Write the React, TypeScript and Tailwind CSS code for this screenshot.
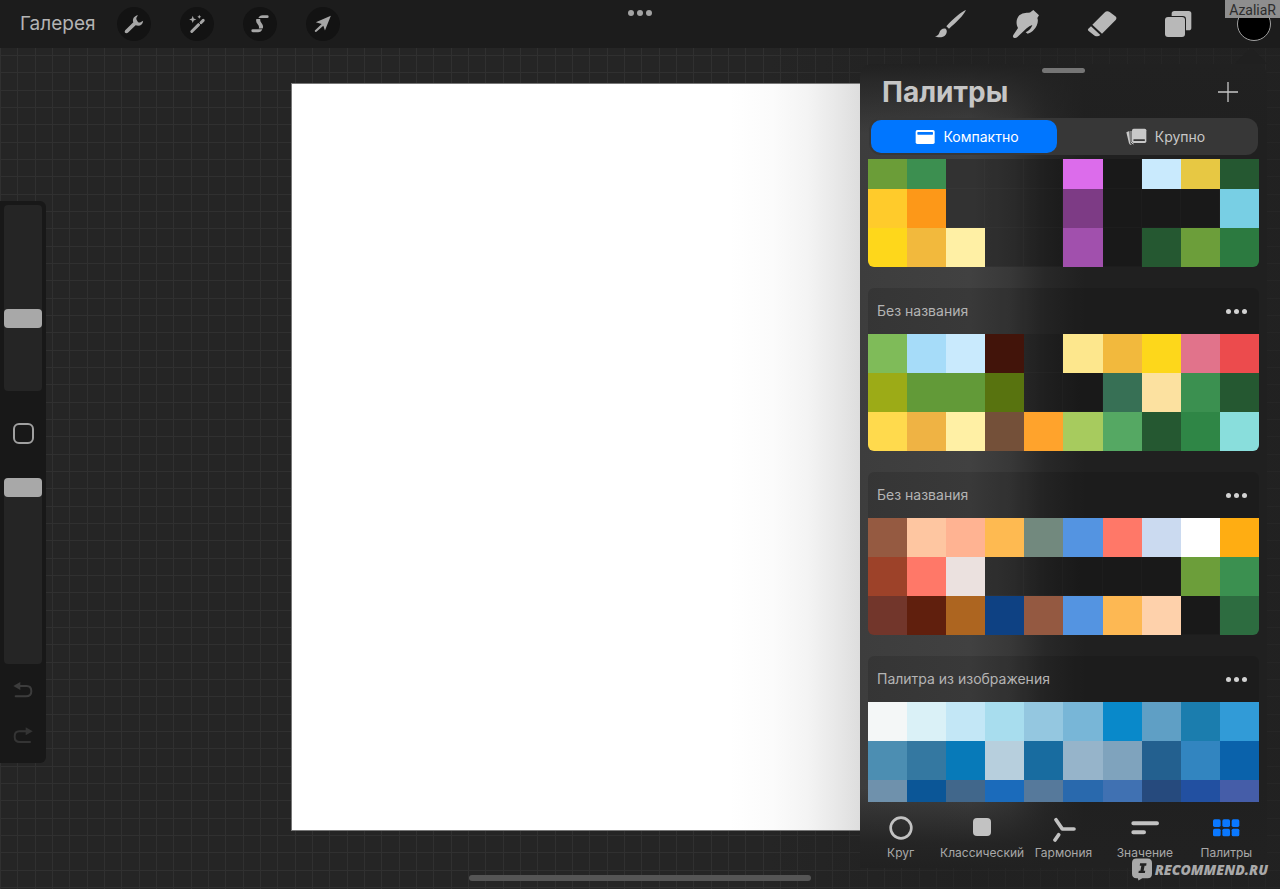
import { useLayoutEffect, useRef, type ReactNode } from 'react';

type Row = (string | null)[];

interface Palette {
  name?: string;
  rows: Row[];
}

const palettes: Palette[] = [
  {
    rows: [
      ['#6b9d38', '#3c8f50', null, null, null, '#dc6ceb', null, '#c9eafd', '#e7c843', '#255831'],
      ['#ffcb2b', '#fd9818', null, null, null, '#7d3b85', null, null, null, '#78cfe4'],
      ['#fed71b', '#f2b93d', '#fff0a5', null, null, '#a150ad', null, '#255831', '#6c9e3a', '#2c7a40'],
    ],
  },
  {
    name: 'Без названия',
    rows: [
      ['#7fbb59', '#a6dcf9', '#c9eafd', '#42140a', null, '#fde78d', '#f2b93d', '#fdd71b', '#e1738b', '#ec4b4d'],
      ['#9cab17', '#629a38', '#629a38', '#58730f', null, null, '#377055', '#fce1a0', '#3b9050', '#255831'],
      ['#ffda4d', '#efb344', '#fff0a5', '#745039', '#ffa32c', '#a7cb5e', '#55a863', '#255831', '#2f8646', '#89dedc'],
    ],
  },
  {
    name: 'Без названия',
    rows: [
      ['#955a41', '#fec6a1', '#ffb392', '#feba51', '#72897e', '#5494e1', '#ff7868', '#cbdaf0', '#ffffff', '#ffad12'],
      ['#9d4229', '#ff7868', '#ebe1df', null, null, null, null, null, '#6c9e3a', '#3b9050'],
      ['#72362b', '#601f0d', '#ad6520', '#0e4183', '#945941', '#5494e1', '#fdb853', '#fed1ab', null, '#2d6c40'],
    ],
  },
  {
    name: 'Палитра из изображения',
    rows: [
      ['#f4f7f7', '#daf1f7', '#c3e7f6', '#a8ddee', '#94c7e0', '#78b6d7', '#0989ca', '#5f9fc5', '#1b7dae', '#319bd7'],
      ['#4c8eb2', '#3478a1', '#077ab9', '#b7cfdd', '#186ca0', '#96b4ca', '#7fa3bd', '#23608f', '#3285c0', '#0a62ab'],
      ['#6f91ac', '#0b5697', '#41678b', '#1b6bbb', '#56799b', '#2969ad', '#4071b2', '#264a7d', '#2250a1', '#455da8'],
    ],
  },
];

function Svg({ box, className, children }: { box: string; className: string; children: ReactNode }) {
  return (
    <svg viewBox={box} className={className} fill="currentColor" aria-hidden="true">
      {children}
    </svg>
  );
}

function RoundButton({ label, children }: { label: string; children: ReactNode }) {
  return (
    <button aria-label={label} className="flex size-[34px] items-center justify-center rounded-full bg-[#131313] text-[#a6a6a6]">
      {children}
    </button>
  );
}

function Header() {
  return (
    <header className="relative z-10 flex h-12 shrink-0 items-center justify-between bg-[#1c1c1c] pl-5 pr-2.5">
      <div className="flex items-center">
        <button className="w-[97px] text-left text-[19px] text-[#b4b4b4]">Галерея</button>
        <div className="flex gap-[29px]">
          <RoundButton label="Действия">
            <Svg box="352 20 104 104" className="size-full">
              <path d="M416 45C404 47 398 57 402 67L377 91C372 98 381 104 386 98L409 76C421 80 431 75 432 62L424 67Q419 69 415 64Q410 58 411 54Z" />
            </Svg>
          </RoundButton>
          <RoundButton label="Коррекция">
            <Svg box="541 20 104 104" className="size-full">
              <path d="M580 47L583 55L591 58L583 61L580 69L577 61L569 58L577 55ZM600 44L602 48L606 50L602 52L600 56L598 52L594 50L598 48Z" />
              <path d="M577 95L598 74M605 68L612 61" fill="none" stroke="currentColor" strokeWidth="9" strokeLinecap="round" />
              <path d="M596 66L608 78" stroke="#131313" strokeWidth="2.500" />
            </Svg>
          </RoundButton>
          <RoundButton label="Выделение">
            <Svg box="729 20 104 104" className="size-full">
              <path d="M776 54Q779 45 789 45H803a4 4 0 0 1 0 9ZM759 97a4 4 0 0 1 0-9H788Q785 97 775 97ZM770 57H782Q780 63 786 70Q793 78 789 86H777Q780 80 774 73Q767 65 770 57Z" />
            </Svg>
          </RoundButton>
          <RoundButton label="Трансформация">
            <Svg box="918 20 104 104" className="size-full">
              <path d="M994 47L948 67L966 72L945 92Q944 98 950 96L971 77L976 92Z" />
            </Svg>
          </RoundButton>
        </div>
      </div>

      <button aria-label="Многозадачность" className="absolute left-1/2 top-2 flex -translate-x-1/2 gap-[3px] py-0.5">
        <span className="size-1.5 rounded-full bg-[#a3a3a3]" />
        <span className="size-1.5 rounded-full bg-[#a3a3a3]" />
        <span className="size-1.5 rounded-full bg-[#a3a3a3]" />
      </button>

      <div className="flex items-center gap-11 text-[#b8b8b8]">
        <button aria-label="Кисть">
          <Svg box="102 24 96 96" className="size-8">
            <path d="M198 30C185 35 163 52 139 79L147 86C168 68 191 46 198 30ZM137 86C128 84 120 90 118 98C116 105 111 108 105 108C112 114 130 114 137 104C141 98 142 91 137 86Z" />
          </Svg>
        </button>
        <button aria-label="Растушёвка">
          <Svg box="330 24 96 96" className="size-8">
            <path d="M340 105L354 84C346 70 350 54 358 46Q366 38 380 38Q389 40 395 34L400 30L417 46L412 54Q416 64 410 77Q402 94 383 101L377 97Q392 91 397 75Q388 77 380 85L353 110Q347 116 341 113Q337 110 340 105Z" />
          </Svg>
        </button>
        <button aria-label="Ластик">
          <Svg box="558 24 96 96" className="size-8">
            <path d="M577 74L613 38Q621 31 629 36L646 49Q652 54 647 60L606 101ZM573 79L601 105Q593 112 584 107L565 92Q562 89 565 86Z" />
          </Svg>
        </button>
        <button aria-label="Слои">
          <Svg box="786 24 96 96" className="size-8">
            <rect x="815" y="33" width="59" height="58" rx="8" />
            <rect x="793" y="48" width="65" height="65" rx="10" fill="#1c1c1c" />
            <rect x="795" y="51" width="60" height="60" rx="9" />
          </Svg>
        </button>
        <button aria-label="Цвет" className="-mx-px size-[34px] rounded-full border border-[#a0a0a0] bg-black" />
      </div>

      <span className="absolute right-0 top-0 flex h-[18px] items-end bg-[#8e8e8e] px-1 font-[Roboto] text-sm leading-4 text-[#2c2c2c]">
        AzaliaR
      </span>
    </header>
  );
}

const sliderClass =
  "block h-[186px] w-[38px] appearance-none rounded-sm bg-[#252525] [direction:rtl] [writing-mode:vertical-lr] [&::-webkit-slider-thumb]:h-[19px] [&::-webkit-slider-thumb]:w-[38px] [&::-webkit-slider-thumb]:appearance-none [&::-webkit-slider-thumb]:rounded [&::-webkit-slider-thumb]:bg-[#a8a8a8]";

function Sidebar() {
  return (
    <aside className="col-start-1 row-start-1 mt-[153px] flex w-[46px] flex-col items-center self-start justify-self-start rounded-r-md bg-[#181818] py-1">
      <input type="range" aria-label="Размер кисти" defaultValue={38} className={sliderClass} />
      <button aria-label="Изменить" className="mb-[34px] mt-8 size-[21px] rounded-md border-2 border-[#a0a0a0]" />
      <input type="range" aria-label="Непрозрачность" defaultValue={100} className={sliderClass} />
      <button aria-label="Отменить" className="mt-4 text-[#3c3c3c]">
        <Svg box="36 204 66 66" className="size-[22px]">
          <path d="M40 222L61 210V234Z" />
          <path d="M58 222H80Q94 222 94 238Q94 253 78 253H47" fill="none" stroke="currentColor" strokeWidth="6" strokeLinecap="round" />
        </Svg>
      </button>
      <button aria-label="Повторить" className="mb-[11px] mt-6 text-[#343434]">
        <Svg box="36 342 66 66" className="size-[22px]">
          <path d="M98 358L77 346V370Z" />
          <path d="M80 358H58Q44 358 44 374Q44 390 60 390H90" fill="none" stroke="currentColor" strokeWidth="6" strokeLinecap="round" />
        </Svg>
      </button>
    </aside>
  );
}

function PaletteCard({ palette }: { palette: Palette }) {
  return (
    <section className="overflow-hidden rounded-md">
      {palette.name && (
        <div className="flex h-[46px] items-center justify-between bg-black/12 pl-[9px] pr-3">
          <h2 className="text-sm text-[#b4b4b4]">{palette.name}</h2>
          <button aria-label="Параметры палитры" className="flex gap-[3px] py-2">
            <span className="size-[5px] rounded-full bg-[#d2d2d2]" />
            <span className="size-[5px] rounded-full bg-[#d2d2d2]" />
            <span className="size-[5px] rounded-full bg-[#d2d2d2]" />
          </button>
        </div>
      )}
      <div className="grid grid-cols-10">
        {palette.rows.flat().map((color, i) =>
          color ? (
            <button key={i} aria-label={color} className="h-[39px]" style={{ backgroundColor: color }} />
          ) : (
            <span key={i} className="h-[39px] border-b border-r border-white/2 bg-black/22" />
          ),
        )}
      </div>
    </section>
  );
}

const tabs: { label: string; icon: ReactNode }[] = [
  {
    label: 'Круг',
    icon: (
      <Svg box="110 491 84 84" className="size-7">
        <circle cx="152" cy="533" r="31" fill="none" stroke="currentColor" strokeWidth="8" />
      </Svg>
    ),
  },
  {
    label: 'Классический',
    icon: (
      <Svg box="353 491 84 84" className="size-7">
        <rect x="368" y="503" width="54" height="54" rx="12" />
      </Svg>
    ),
  },
  {
    label: 'Гармония',
    icon: (
      <Svg box="598 491 84 84" className="size-7">
        <path d="M619 508L638 536H673M627 553L616 569" fill="none" stroke="currentColor" strokeWidth="11" strokeLinecap="round" strokeLinejoin="round" />
      </Svg>
    ),
  },
  {
    label: 'Значение',
    icon: (
      <Svg box="842 491 84 84" className="size-7">
        <path d="M849 519H920M849 546H881" fill="none" stroke="currentColor" strokeWidth="12" strokeLinecap="round" />
      </Svg>
    ),
  },
  {
    label: 'Палитры',
    icon: (
      <Svg box="1087 491 84 84" className="size-7 text-[#0a78ff]">
        {[1090, 1118, 1146].map((x) =>
          [507, 535].map((y) => <rect key={`${x}-${y}`} x={x} y={y} width="23" height="23" rx="5" />),
        )}
      </Svg>
    ),
  },
];

function PalettesPanel() {
  const list = useRef<HTMLDivElement>(null);
  useLayoutEffect(() => {
    if (list.current) list.current.scrollTop = 9;
  }, []);

  return (
    <aside className="relative col-start-1 row-start-1 mb-[21px] mr-[13px] mt-4 flex min-h-0 w-[407px] flex-col justify-self-end rounded-xl rounded-bl-none bg-[linear-gradient(to_bottom,#212121_0px,#212121b0_20px,#21212100_70px,#21212100_calc(100%-80px),#212121e0_calc(100%-25px),#212121_100%),linear-gradient(to_right,#3d3d3d_0px,#414141_110px,#383838_150px,#282828_185px,#202020_225px,#202020_100%)]">
      <svg viewBox="0 0 32 16" className="absolute -top-4 right-0 h-4 w-8 text-[#202020]" fill="currentColor" aria-hidden="true">
        <path d="M0 16L12 3Q16 -1 20 3L32 16Z" />
      </svg>
      <div className="mx-auto mt-1 h-[5px] w-[43px] shrink-0 rounded-full bg-[#757575]" />
      <div className="flex h-[45px] shrink-0 items-center justify-between pb-2 pl-[22px] pr-7">
        <h1 className="text-[28px] font-bold leading-8 text-[#c6c6c6]">Палитры</h1>
        <button aria-label="Добавить палитру" className="text-[#c6c6c6]">
          <Svg box="0 0 22 22" className="size-[22px]">
            <path d="M11 1V21M1 11H21" stroke="currentColor" strokeWidth="1.300" />
          </Svg>
        </button>
      </div>
      <div className="mx-[9px] mb-1 grid h-[37px] shrink-0 grid-cols-[186fr_199fr] rounded-xl bg-[#373737] p-0.5 text-sm">
        <button className="flex items-center justify-center gap-2 rounded-[10px] bg-[#0076ff] pl-1.5 text-white">
          <Svg box="197 234 60 48" className="h-4 w-5">
            <rect x="199" y="237" width="57" height="42" rx="5" />
            <rect x="204" y="243" width="47" height="8" rx="2" fill="#0076ff" />
          </Svg>
          Компактно
        </button>
        <button className="flex items-center justify-center gap-2 pl-[18px] text-[#c8c8c8]">
          <Svg box="828 234 63 54" className="h-[18px] w-[21px]">
            <path d="M829 247L838 243L840 274Q840 282 846 285Q839 286 837 280Z" />
            <path d="M843 243V275Q845 281 851 282" fill="none" stroke="currentColor" strokeWidth="3" />
            <rect x="846" y="236" width="43" height="43" rx="5" />
            <rect x="850" y="268" width="35" height="5" rx="2" fill="#373737" />
          </Svg>
          Крупно
        </button>
      </div>
      <div ref={list} className="mx-2 flex min-h-0 flex-1 flex-col gap-[21px] overflow-y-auto [scrollbar-width:none] *:shrink-0">
        {palettes.map((p, i) => (
          <PaletteCard key={i} palette={p} />
        ))}
      </div>
      <nav className="grid h-[66px] shrink-0 grid-cols-5 pt-3 text-xs text-[#a8a8a8]">
        {tabs.map((t) => (
          <button key={t.label} className="flex flex-col items-center gap-[3px]">
            <span className="text-[#c2c2c2]">{t.icon}</span>
            {t.label}
          </button>
        ))}
      </nav>
    </aside>
  );
}

export default function App() {
  return (
    <div className="relative flex h-screen flex-col overflow-hidden bg-[#252525] font-['Inter','Liberation_Sans',sans-serif]">
      <Header />
      <main className="grid min-h-0 flex-1 grid-cols-1 grid-rows-1 bg-[linear-gradient(to_right,#25252500_60%,#1f1f1f99_75%),linear-gradient(to_right,#303030_1px,transparent_1px,transparent_17px,#303030_17px,#303030_18px,transparent_18px,transparent_35px,#303030_35px,#303030_36px,transparent_36px),linear-gradient(to_bottom,#303030_1px,transparent_1px,transparent_17px,#303030_17px,#303030_18px,transparent_18px,transparent_35px,#303030_35px,#303030_36px,transparent_36px)] bg-[length:100%_100%,52px_52px,52px_52px] bg-[position:0px_0px,0px_7px,0px_7px]">
        <div className="col-start-1 row-start-1 mt-[35px] aspect-[698/747] h-[calc(100%-93px)] justify-self-center border border-[#777] bg-white bg-[linear-gradient(to_right,#fff_63%,#fbfbfb_69%,#f4f4f4_74%,#e9e9e9_78%,#dcdcdc_82%)]" />
        <Sidebar />
        <PalettesPanel />
        <div className="col-start-1 row-start-1 mb-2 h-1.5 w-[342px] self-end justify-self-center rounded-full bg-[#555]" />
      </main>
      <div className="absolute bottom-2 right-3 flex items-center gap-[3px] text-[#a9a9a9]">
        <Svg box="848 622 62 70" className="h-[23px] w-5">
          <path d="M862 623H896Q910 623 910 637V670Q910 684 896 684H880L868 691L866 684H862Q848 684 848 670V637Q848 623 862 623Z" />
          <path d="M873 638H893L892 645H887L884 661H889L888 668H868L869 661H874L877 645H872Z" fill="#222" />
        </Svg>
        <span className="font-['Open_Sans'] text-sm font-extrabold italic leading-5">RECOMMEND.RU</span>
      </div>
    </div>
  );
}
